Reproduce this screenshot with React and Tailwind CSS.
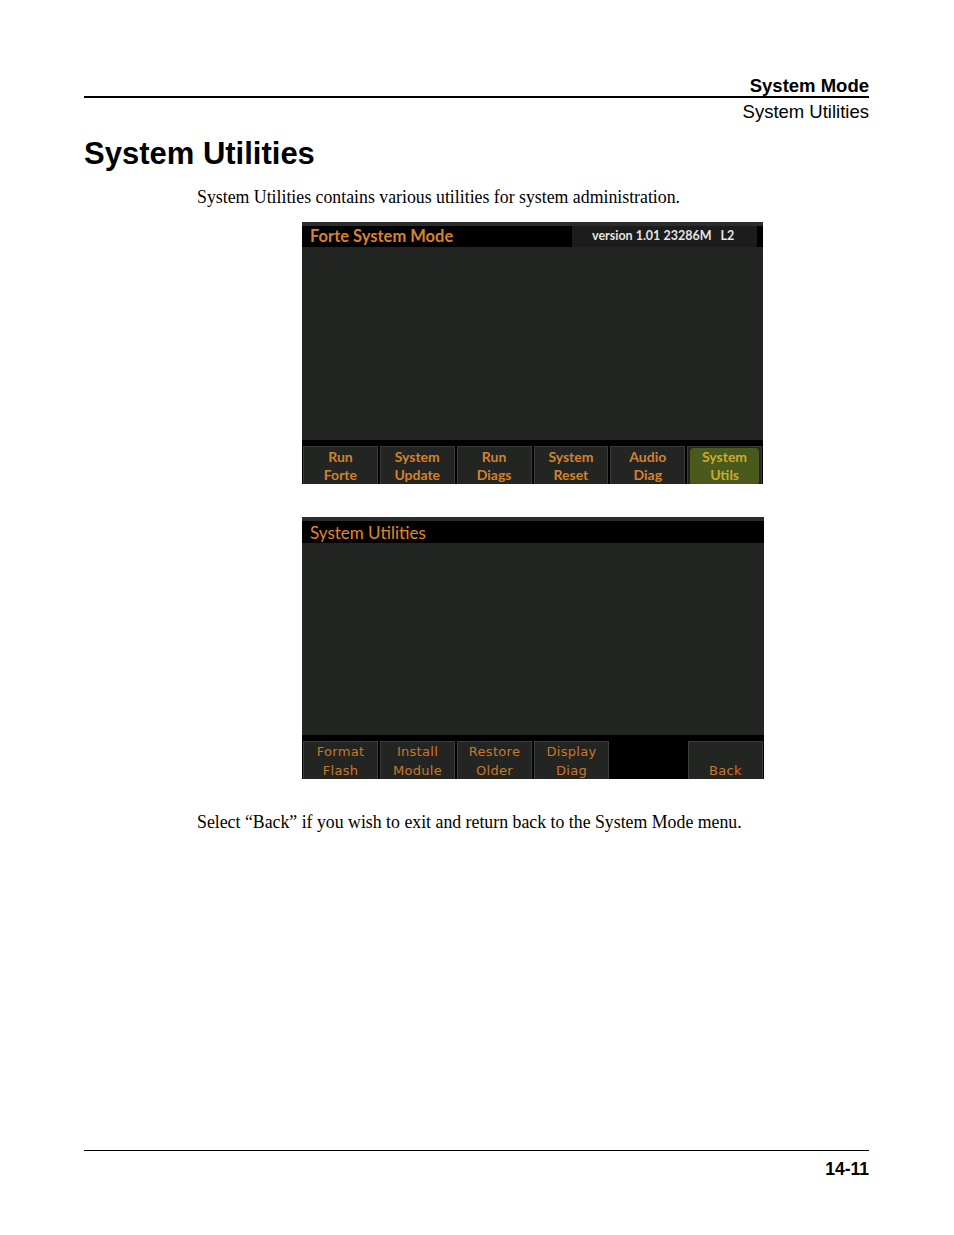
import React from 'react';

const modeButtons = [
    ['Run', 'Forte'],
    ['System', 'Update'],
    ['Run', 'Diags'],
    ['System', 'Reset'],
    ['Audio', 'Diag'],
    ['System', 'Utils'],
];

const utilButtons = [
    ['Format', 'Flash'],
    ['Install', 'Module'],
    ['Restore', 'Older'],
    ['Display', 'Diag'],
    null,
    ['', 'Back'],
];

const ModeScreen = () => (
    <div className="w-[461px] h-[262px] bg-[#2b2d2b] pt-[4px] flex flex-col overflow-hidden">
        <div className="h-[21px] bg-black flex items-center justify-between pl-[8px] pr-[6px] shrink-0">
            <span className="text-[#d8832b] text-[16.5px] font-bold leading-none font-['Lato',sans-serif]">Forte System Mode</span>
            <span className="h-full w-[185px] bg-[#1b1c1b] flex items-center pl-[20px] text-[#e4e4e4] text-[12.5px] font-bold font-['Lato',sans-serif] whitespace-pre">
                version 1.01 23286M   L2
            </span>
        </div>
        <div className="flex-1 bg-[#222422]" />
        <div className="h-[6px] bg-black shrink-0" />
        <div className="h-[38px] bg-black grid grid-cols-6 gap-[2px] px-[1px] shrink-0">
            {modeButtons.map((b, i) => {
                const active = i === 5;
                return (
                    <div key={i} className="h-[42px] bg-[#232523] border border-[#3a3c3a] px-[2px] pt-[1px] pb-[2px]">
                        <div className={`h-full flex flex-col items-center rounded-[4px] font-['Lato',sans-serif] font-bold text-[14px] leading-[18px] ${active ? 'bg-[#4a5a1c] text-[#c9ab2e]' : 'text-[#d4812c]'}`}>
                            <span>{b[0]}</span>
                            <span>{b[1]}</span>
                        </div>
                    </div>
                );
            })}
        </div>
    </div>
);

const UtilScreen = () => (
    <div className="w-[462px] h-[262px] bg-[#2b2d2b] pt-[4px] flex flex-col overflow-hidden">
        <div className="h-[22px] bg-black flex items-center pl-[8px] shrink-0">
            <span className="text-[#e3852c] text-[17px] leading-none font-['Lato',sans-serif]">System Utilities</span>
        </div>
        <div className="flex-1 bg-[#232523]" />
        <div className="h-[6px] bg-black shrink-0" />
        <div className="h-[38px] bg-black grid grid-cols-6 gap-[2px] px-[1px] shrink-0">
            {utilButtons.map((b, i) =>
                b ? (
                    <div key={i} className="h-[42px] bg-[#232523] border border-[#3c3e3c] flex flex-col items-center font-['DejaVu_Sans',sans-serif] text-[13px] leading-[19px] tracking-[0.3px] text-[#c97628]">
                        <span className="h-[19px]">{b[0]}</span>
                        <span>{b[1]}</span>
                    </div>
                ) : (
                    <div key={i} />
                )
            )}
        </div>
    </div>
);

const App = () => {
    return (
        <div className="w-[954px] h-[1235px] bg-white relative">
            <div className="ml-[84px] w-[785px] pt-[76px] flex flex-col">
                {/* running header */}
                <div className="text-right font-['Liberation_Sans',Arial,sans-serif] font-bold text-[18.5px] leading-[20px] text-black">System Mode</div>
                <div className="h-[2px] bg-black" />
                <div className="text-right font-['Liberation_Sans',Arial,sans-serif] text-[18.5px] leading-[21px] text-black mt-[3px]">System Utilities</div>

                <h1 className="mt-[14px] font-['Liberation_Sans',Arial,sans-serif] font-bold text-[31px] leading-[36px] text-black">System Utilities</h1>

                <p className="mt-[14px] ml-[113px] font-['Liberation_Serif','Times_New_Roman',serif] text-[17.8px] leading-[22px] text-black">
                    System Utilities contains various utilities for system administration.
                </p>

                <div className="mt-[14px] ml-[218px]">
                    <ModeScreen />
                </div>

                <div className="mt-[33px] ml-[218px]">
                    <UtilScreen />
                </div>

                <p className="mt-[32px] ml-[113px] font-['Liberation_Serif','Times_New_Roman',serif] text-[17.8px] leading-[22px] text-black">
                    Select “Back” if you wish to exit and return back to the System Mode menu.
                </p>
            </div>

            <div className="absolute left-[84px] top-[1150px] w-[785px]">
                <div className="h-px bg-black" />
                <div className="text-right mt-[8px] font-['Liberation_Sans',Arial,sans-serif] font-bold text-[17.5px] leading-[20px] text-black">14-11</div>
            </div>
        </div>
    );
};

export default App;
